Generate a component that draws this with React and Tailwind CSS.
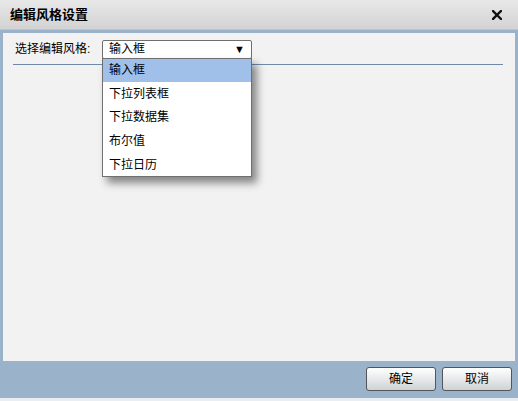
import React, { useState } from 'react';

const options = ['输入框', '下拉列表框', '下拉数据集', '布尔值', '下拉日历'];

const App = () => {
  const [selected, setSelected] = useState(0);

  return (
    <div
      className="w-[518px] h-[401px] flex flex-col bg-[#9ab3cb] text-[12px] text-black"
      style={{ fontFamily: '"Liberation Sans", "Noto Sans CJK SC", sans-serif' }}
    >
      {/* 标题栏 */}
      <div className="h-[30px] flex items-center justify-between pl-[10px] pr-[16px] bg-gradient-to-b from-[#e8e8e8] to-[#d3d3d3] border-b border-[#c4c4c4]">
        <span className="text-[13px] font-bold">编辑风格设置</span>
        <svg width="10" height="10" viewBox="0 0 10 10">
          <path d="M1 1 L9 9 M9 1 L1 9" stroke="#111" strokeWidth="2.4" strokeLinecap="square" />
        </svg>
      </div>

      {/* 主要内容区域 */}
      <div className="flex-1 flex flex-col pl-[3px] pr-[3px] pt-[3px]">
        <div className="h-[328px] bg-[#f2f2f2] pl-[10px] pr-[12px] pt-[7px]">
          <div className="flex items-center h-[18px] pl-[2px]">
            <span className="w-[87px]">选择编辑风格:</span>
            <div className="relative">
              <div className="w-[150px] h-[19px] bg-white border border-[#6f6f6f] rounded-[2px] flex items-center justify-between pl-[6px] pr-[6px]">
                <span>{options[selected]}</span>
                <span className="text-[11px] leading-none">▼</span>
              </div>
              {/* 下拉列表 */}
              <div className="absolute left-0 top-[18px] w-[150px] bg-white border border-[#6f6f6f] shadow-[5px_6px_8px_rgba(0,0,0,0.45)] z-10">
                {options.map((opt, i) => (
                  <div
                    key={opt}
                    onClick={() => setSelected(i)}
                    className={`h-[23.6px] flex items-center pl-[6px] ${i === selected ? 'bg-[#a0c0e9]' : ''}`}
                  >
                    {opt}
                  </div>
                ))}
              </div>
            </div>
          </div>
          <div className="mt-[6px] h-px bg-[#6f8aa8]"></div>
        </div>

        {/* 底部按钮 */}
        <div className="flex justify-end gap-[6px] pt-[6px] pr-[3px]">
          <button className="w-[70px] h-[24px] rounded-[3px] border border-[#555] bg-gradient-to-b from-[#ffffff] to-[#cfd3d6] text-[12px]">
            确定
          </button>
          <button className="w-[70px] h-[24px] rounded-[3px] border border-[#555] bg-gradient-to-b from-[#ffffff] to-[#cfd3d6] text-[12px]">
            取消
          </button>
        </div>
        <div className="flex-1"></div>
      </div>
      <div className="h-[3px] bg-[#e9eef3]"></div>
    </div>
  );
};

export default App;
